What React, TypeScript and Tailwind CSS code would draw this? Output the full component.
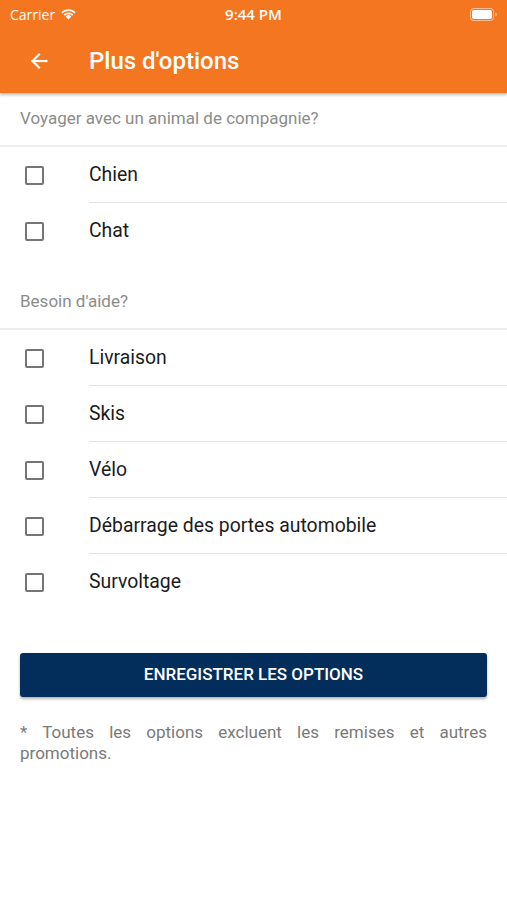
import React from "react";

function Checkbox() {
  return <div className="w-[19px] h-[19px] border-2 border-[#757575] rounded-[2px] shrink-0" />;
}

function Row({ label, last }: { label: string; last?: boolean }) {
  return (
    <div className="flex h-[56px] items-center">
      <div className="w-[89px] pl-[25px] flex items-center">
        <Checkbox />
      </div>
      <div className={"flex-1 h-full flex items-center text-[19.4px] text-[#1c1c1c] " + (last ? "" : "border-b border-[#e3e3e3]")}>
        {label}
      </div>
    </div>
  );
}

function SectionHeader({ text }: { text: string }) {
  return (
    <div className="h-[54px] flex items-center px-[20px] text-[17px] text-[#8c8c8c] border-b-2 border-[#ececec]">
      {text}
    </div>
  );
}

export default function App() {
  return (
    <div className="w-[507px] h-[900px] bg-white overflow-hidden" style={{ fontFamily: "Roboto, 'Liberation Sans', sans-serif" }}>
      <div className="bg-[#f47621] text-white shadow-[0_2px_3px_rgba(0,0,0,0.25)] relative z-10">
        <div className="h-[28px] flex items-center justify-between px-[10px]">
          <div className="flex items-center gap-[5px] w-[120px]">
            <span className="text-[14px]" style={{ fontFamily: "'Open Sans', 'Liberation Sans', sans-serif" }}>Carrier</span>
            <svg width="17" height="12" viewBox="0 0 17 12">
              <path d="M8.5 11.5 L5.6 8.4 A4.2 4.2 0 0 1 11.4 8.4 Z" fill="white" />
              <path d="M3.6 6.4 A7 7 0 0 1 13.4 6.4 L12.1 7.8 A5.1 5.1 0 0 0 4.9 7.8 Z" fill="white" />
              <path d="M1.3 4.1 A10.3 10.3 0 0 1 15.7 4.1 L14.4 5.5 A8.4 8.4 0 0 0 2.6 5.5 Z" fill="white" />
            </svg>
          </div>
          <span className="text-[15px] font-semibold" style={{ fontFamily: "'Open Sans', 'Liberation Sans', sans-serif" }}>9:44 PM</span>
          <div className="w-[120px] flex justify-end">
            <svg width="27" height="13" viewBox="0 0 27 13">
              <rect x="0.5" y="0.5" width="23" height="12" rx="3" fill="none" stroke="white" strokeOpacity="0.5" />
              <rect x="2" y="2" width="20" height="9" rx="1.8" fill="white" />
              <path d="M25 4.5 A2 2 0 0 1 25 8.5 Z" fill="white" fillOpacity="0.5" />
            </svg>
          </div>
        </div>
        <div className="h-[65px] flex items-center">
          <div className="w-[89px] pl-[28px] flex items-center">
            <svg width="22" height="22" viewBox="0 0 24 24" fill="none" stroke="white" strokeWidth="2.4" strokeLinecap="square">
              <path d="M20 12H5" />
              <path d="M12 5l-7 7 7 7" />
            </svg>
          </div>
          <span className="text-[24px] font-medium">Plus d'options</span>
        </div>
      </div>

      <SectionHeader text="Voyager avec un animal de compagnie?" />
      <Row label="Chien" />
      <Row label="Chat" last />

      <div className="mt-[17px]">
        <SectionHeader text="Besoin d'aide?" />
      </div>
      <Row label="Livraison" />
      <Row label="Skis" />
      <Row label="Vélo" />
      <Row label="Débarrage des portes automobile" />
      <Row label="Survoltage" last />

      <div className="px-[20px] mt-[43px]">
        <button className="w-full h-[44px] bg-[#032e5b] rounded-[3px] text-white text-[17px] font-medium shadow-[0_2px_3px_rgba(0,0,0,0.3)]">
          ENREGISTRER LES OPTIONS
        </button>
        <p className="mt-[25px] text-[17px] leading-[21px] text-[#7a7a7a] text-justify">
          * Toutes les options excluent les remises et autres promotions.
        </p>
      </div>
    </div>
  );
}
